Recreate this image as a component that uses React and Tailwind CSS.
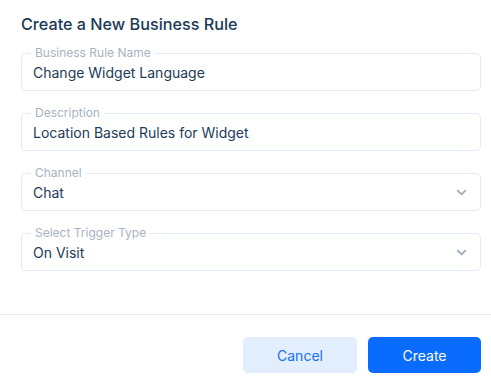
import { ChevronDown } from "lucide-react";

function Field({ label, value, select }) {
  return (
    <div className="relative h-[38px] rounded-[5px] border border-[#e2ebf6] bg-white flex items-center pl-[11px] pr-[11px]">
      <span className="absolute -top-[8px] left-[9px] bg-white px-[4px] text-[12px] leading-[14px] text-[#a7b3c2]">
        {label}
      </span>
      <span className="flex-1 text-[14px] text-[#1d3b58]">{value}</span>
      {select && <ChevronDown size={15} strokeWidth={3} className="text-[#9fadbd]" />}
    </div>
  );
}

export default function App() {
  return (
    <div
      className="w-[491px] h-[388px] bg-white flex flex-col"
      style={{ fontFamily: "Inter, 'Noto Sans', sans-serif" }}
    >
      <div className="pl-[21px] pr-[10px] pt-[12px]">
        <h2 className="text-[16.2px] leading-[24px] font-medium text-[#1b3a57]">
          Create a New Business Rule
        </h2>
        <div className="mt-[17px] flex flex-col gap-[22px]">
          <Field label="Business Rule Name" value="Change Widget Language" />
          <Field label="Description" value="Location Based Rules for Widget" />
          <Field label="Channel" value="Chat" select />
          <Field label="Select Trigger Type" value="On Visit" select />
        </div>
      </div>
      <div className="mt-[43px] border-t border-[#e2ebf6]" />
      <div className="flex justify-end gap-[11px] px-[10px] pt-[22px]">
        <button className="w-[114px] h-[36px] rounded-[5px] bg-[#e3eefc] text-[14px] text-[#1670f0]">
          Cancel
        </button>
        <button className="w-[113px] h-[36px] rounded-[5px] bg-[#0a6cff] text-[14px] text-white">
          Create
        </button>
      </div>
    </div>
  );
}
